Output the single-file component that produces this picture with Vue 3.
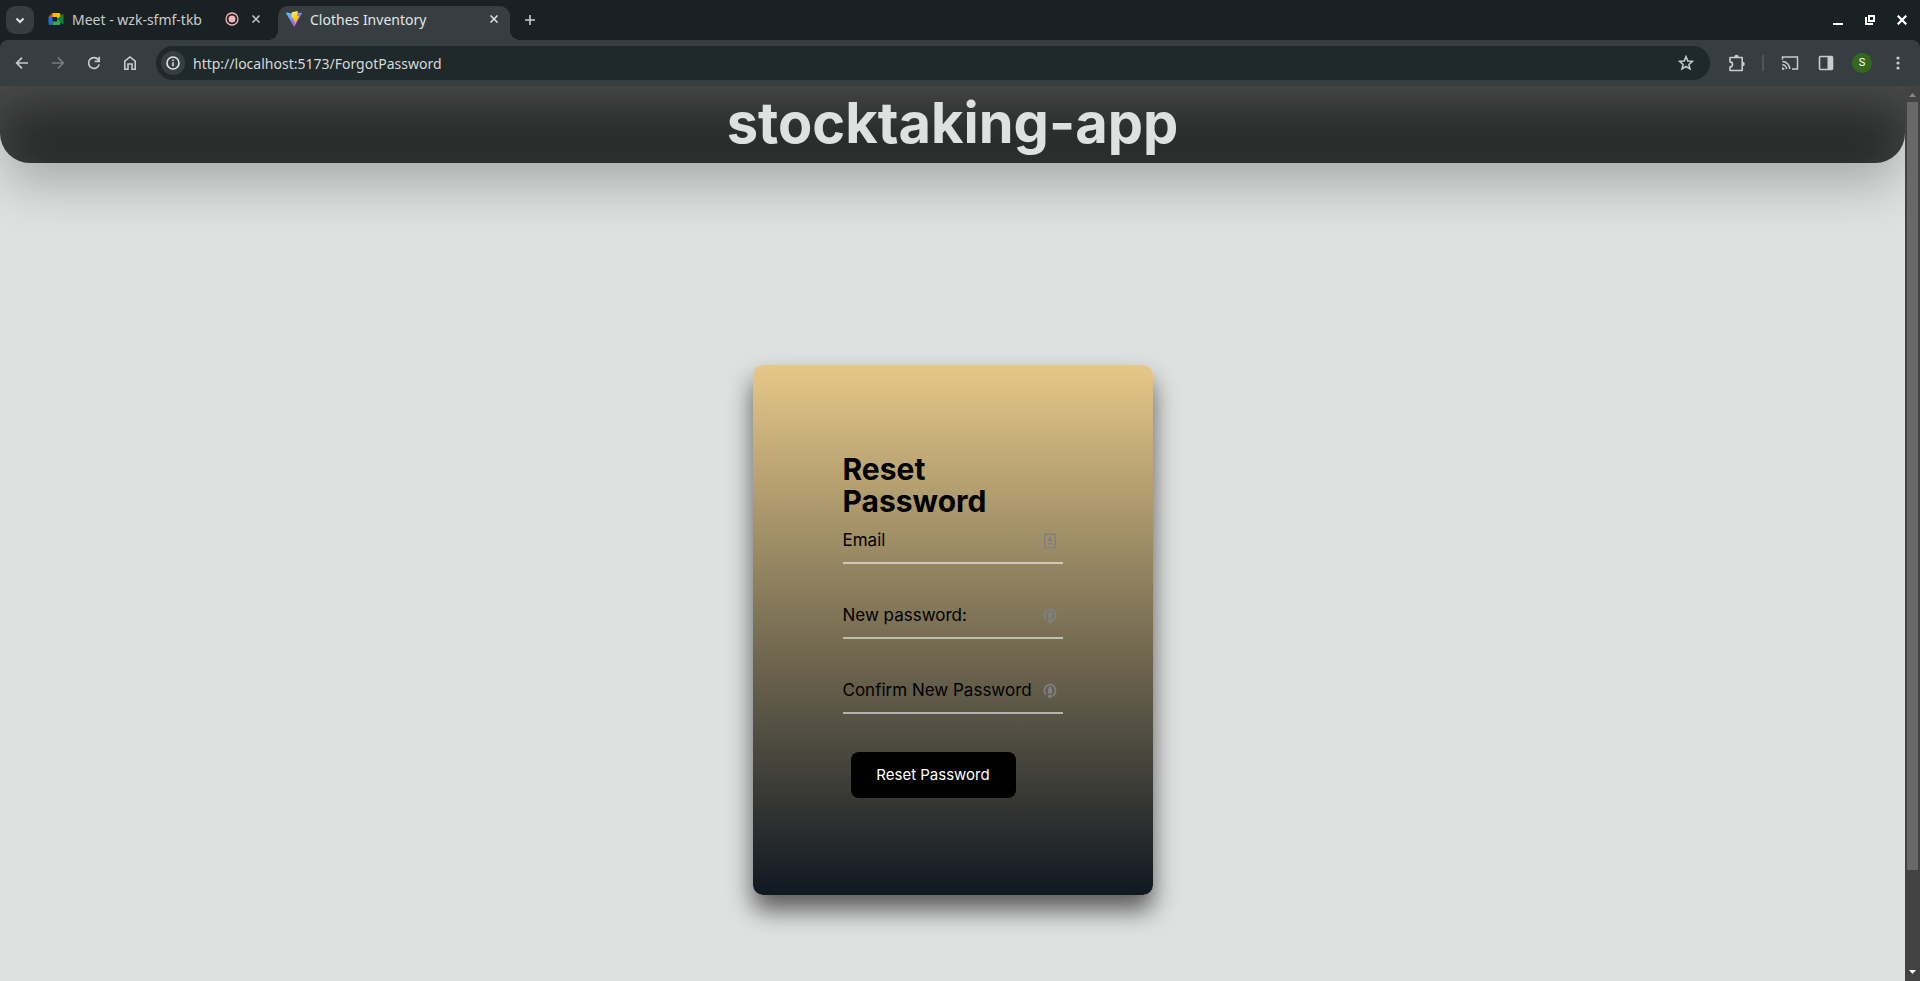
<script setup>
import { ref } from 'vue'

const address = ref('http://localhost:5173/ForgotPassword')

const form = ref({ email: '', password: '', confirm: '' })

const fields = [
  { id: 'email', label: 'Email', type: 'email', icon: 'contact' },
  { id: 'password', label: 'New password:', type: 'password', icon: 'key' },
  { id: 'confirm', label: 'Confirm New Password', type: 'password', icon: 'key' },
]
</script>

<template>
  <div class="window">
    <div class="tabstrip">
      <button class="tab-search" type="button" aria-label="Search tabs">
        <svg width="12" height="12" viewBox="0 0 12 12"><path d="M2.5 4.5 6 8l3.500-3.500" fill="none" stroke="#dfe3e4" stroke-width="2" /></svg>
      </button>

      <div class="tab">
        <svg class="favicon" width="16" height="16" viewBox="0 0 16 16">
          <path d="M4.500 2v4H0.500z" fill="#ea4335" />
          <path d="M0.500 6h4v5h-4z" fill="#1a73e8" />
          <path d="M0.500 10.500h4V14H2a1.500 1.500 0 0 1-1.500-1.500z" fill="#1967d2" />
          <path d="M4.500 2H11a1.500 1.500 0 0 1 1.500 1.500V8L9 7V6H4.500z" fill="#fbbc04" />
          <path d="M4.500 10.500H9V8l3.500 0v4.500A1.500 1.500 0 0 1 11 14H4.500z" fill="#34a853" />
          <path d="M9 8l5.500-4.800q1-.6 1 .5v8.600q0 1-1 .4z" fill="#188038" />
        </svg>
        <span class="tab-title">Meet - wzk-sfmf-tkb</span>
        <svg class="recording" width="14" height="14" viewBox="0 0 14 14">
          <circle cx="7" cy="7" r="6" fill="none" stroke="#f2b8b5" stroke-width="1.300" />
          <circle cx="7" cy="7" r="3.500" fill="#f2b8b5" />
        </svg>
        <button class="tab-close" type="button" aria-label="Close Meet tab">
          <svg width="8" height="8" viewBox="0 0 8 8"><path d="M.5.5l7 7m0-7l-7 7" stroke="#c7cccd" stroke-width="1.500" /></svg>
        </button>
      </div>

      <div class="tab active">
        <svg class="favicon" width="16" height="16" viewBox="0 0 16 16">
          <defs>
            <linearGradient id="shield" x1="0" y1="0" x2=".6" y2="1">
              <stop offset="0" stop-color="#41d1ff" />
              <stop offset="1" stop-color="#bd34fe" />
            </linearGradient>
            <linearGradient id="bolt" x1=".4" y1="0" x2=".6" y2="1">
              <stop offset="0" stop-color="#ffea83" />
              <stop offset=".2" stop-color="#ffdd35" />
              <stop offset="1" stop-color="#ffa800" />
            </linearGradient>
          </defs>
          <path d="M15.900 2.300 8.500 15.400q-.4.600-.8 0L.1 2.300q-.3-.8.600-.7L8 2.900l7.300-1.300q.9-.1.600.7z" fill="url(#shield)" />
          <path d="M11.500.1 6 1.200q-.3 0-.3.300L5.400 7q0 .4.400.4l1.500-.4q.5 0 .4.500L7.200 9.700q0 .5.400.4l1-.3q.5 0 .4.500l-.7 3.500q0 .6.400.1l4.400-8.500q.1-.4-.3-.4l-1.600.3q-.4 0-.3-.4l1-3.900z" fill="url(#bolt)" />
        </svg>
        <span class="tab-title">Clothes Inventory</span>
        <button class="tab-close" type="button" aria-label="Close Clothes Inventory tab">
          <svg width="8" height="8" viewBox="0 0 8 8"><path d="M.5.5l7 7m0-7l-7 7" stroke="#e3e6e7" stroke-width="1.500" /></svg>
        </button>
      </div>

      <button class="new-tab" type="button" aria-label="New tab">
        <svg width="12" height="12" viewBox="0 0 12 12"><path d="M6 1v10M1 6h10" stroke="#c7cccd" stroke-width="1.600" /></svg>
      </button>

      <div class="window-controls">
        <button type="button" aria-label="Minimize">
          <svg width="10" height="10" viewBox="0 0 10 10"><path d="M0 9h10" stroke="#fff" stroke-width="2" /></svg>
        </button>
        <button type="button" aria-label="Restore">
          <svg width="10" height="10" viewBox="0 0 10 10"><path d="M4 1h5v5H4zM1 2v7h7" fill="none" stroke="#fff" stroke-width="2" /></svg>
        </button>
        <button type="button" aria-label="Close window">
          <svg width="10" height="10" viewBox="0 0 10 10"><path d="M.7.7l8.600 8.600m0-8.600L.7 9.300" stroke="#fff" stroke-width="2.200" /></svg>
        </button>
      </div>
    </div>

    <div class="toolbar">
      <button type="button" aria-label="Back">
        <svg width="16" height="16" viewBox="0 0 16 16"><path d="M14 8H3M8 2.700 2.700 8 8 13.300" fill="none" stroke="#c7cccd" stroke-width="1.700" /></svg>
      </button>
      <button type="button" aria-label="Forward">
        <svg width="16" height="16" viewBox="0 0 16 16"><path d="M2 8h11M8 2.700 13.300 8 8 13.300" fill="none" stroke="#757c7f" stroke-width="1.700" /></svg>
      </button>
      <button type="button" aria-label="Reload">
        <svg width="16" height="16" viewBox="0 0 16 16"><path d="M13.200 9.400A5.400 5.400 0 1 1 12.200 4.600L13 5.500" fill="none" stroke="#c7cccd" stroke-width="1.700" /><path d="M13.200 1.800v4.500H8.700" fill="none" stroke="#c7cccd" stroke-width="1.700" /></svg>
      </button>
      <button type="button" aria-label="Home">
        <svg width="16" height="16" viewBox="0 0 16 16"><path d="M2.800 6.200 8 2l5.200 4.200v8H10V9H6v5.200H2.800z" fill="none" stroke="#c7cccd" stroke-width="1.600" /></svg>
      </button>

      <div class="omnibox">
        <button class="site-info" type="button" aria-label="View site information">
          <svg width="14" height="14" viewBox="0 0 14 14"><circle cx="7" cy="7" r="6" fill="none" stroke="#e3e6e7" stroke-width="1.600" /><path d="M7 6.200v4M7 3.600v1.500" stroke="#e3e6e7" stroke-width="1.500" /></svg>
        </button>
        <input v-model="address" type="text" aria-label="Address" spellcheck="false" />
        <button class="bookmark" type="button" aria-label="Bookmark this tab">
          <svg width="16" height="16" viewBox="0 0 16 16"><path d="M8 1.600 9.800 6l4.700.3-3.600 3.100 1.100 4.600L8 11.500 4 14l1.100-4.600L1.500 6.300 6.200 6z" fill="none" stroke="#c7cccd" stroke-width="1.500" /></svg>
        </button>
      </div>

      <button type="button" aria-label="Extensions">
        <svg width="18" height="18" viewBox="0 0 18 18"><path d="M2 3.500h12.200v13H2v-3.600a2.500 2.500 0 0 0 0-5z" fill="none" stroke="#c7cccd" stroke-width="1.600" stroke-linejoin="round" /><path d="M6.300 3a2.200 2.200 0 0 1 4.400 0zM14.600 7.800a2.200 2.200 0 0 1 0 4.400z" fill="#c7cccd" /></svg>
      </button>
      <span class="divider"></span>
      <button type="button" aria-label="Cast">
        <svg width="18" height="16" viewBox="0 0 18 16"><path d="M1.500 4.500V2h15v12H11M1.300 6.500a7.500 7.500 0 0 1 7.500 7.500M1.300 9.800A4.300 4.300 0 0 1 5.600 14.100" fill="none" stroke="#c7cccd" stroke-width="1.500" /><path d="M1 12.200a2.600 2.600 0 0 1 2.600 2.600H1z" fill="#c7cccd" /></svg>
      </button>
      <button type="button" aria-label="Side panel">
        <svg width="16" height="16" viewBox="0 0 16 16"><rect x="1.500" y="1.500" width="13" height="13" rx="1" fill="none" stroke="#c7cccd" stroke-width="1.600" /><path d="M9.500 1.500h5v13h-5z" fill="#c7cccd" /></svg>
      </button>
      <button type="button" aria-label="Profile"><span class="avatar">S</span></button>
      <button type="button" aria-label="Menu">
        <svg width="4" height="16" viewBox="0 0 4 16"><g fill="#c7cccd"><circle cx="2" cy="3" r="1.600" /><circle cx="2" cy="8" r="1.600" /><circle cx="2" cy="13" r="1.600" /></g></svg>
      </button>
    </div>

    <div class="viewport">
      <div class="page">
        <header class="banner"><h1>stocktaking-app</h1></header>
        <main>
          <form class="card" @submit.prevent>
            <h2>Reset Password</h2>
            <div v-for="field in fields" :key="field.id" class="field">
              <input :id="field.id" v-model="form[field.id]" :type="field.type" />
              <label v-show="!form[field.id]" :for="field.id">{{ field.label }}</label>
              <svg v-if="field.icon === 'contact'" class="hint" width="14" height="16" viewBox="0 0 14 16">
                <rect x="1.750" y="1.250" width="10.500" height="13.500" rx=".6" fill="none" stroke="#808083" stroke-width="1.600" />
                <path d="M6 3.500h2v2l1 1v1.700H5V6.500l1-1zM4.500 10h5v1.500h-5z" fill="#808083" />
              </svg>
              <svg v-else class="hint" width="14" height="16" viewBox="0 0 14 16">
                <path d="M3.200 12A5.600 6 0 1 1 9.800 12.700L7 13.500" fill="none" stroke="#808083" stroke-width="1.700" />
                <path d="M4.300 13.300 7.600 10.800v5.200zM4.800 6.200h4.400v4.300H4.800zM5.400 6.500V5a1.600 1.600 0 0 1 3.200 0v1.500z" fill="#808083" />
              </svg>
            </div>
            <button class="submit" type="submit">Reset Password</button>
          </form>
        </main>
      </div>
      <div class="scrollbar" aria-hidden="true">
        <svg width="7" height="4" viewBox="0 0 7 4"><path d="M3.500 0 7 4H0z" fill="#878787" /></svg>
        <div class="track"><div class="thumb"></div></div>
        <svg width="7" height="4" viewBox="0 0 7 4"><path d="M0 0h7L3.500 4z" fill="#fff" /></svg>
      </div>
    </div>
  </div>
</template>

<style>
body {
  margin: 0;
}
</style>

<style scoped>
* {
  box-sizing: border-box;
}

button,
input {
  margin: 0;
  padding: 0;
  border: 0;
  background: none;
  font: inherit;
  color: inherit;
}

button {
  display: flex;
  align-items: center;
  justify-content: center;
  flex: none;
}

svg {
  display: block;
  flex: none;
}

.window {
  display: flex;
  flex-direction: column;
  height: 100vh;
  overflow: hidden;
  background: #1a2124;
  font-family: "Noto Sans", "Open Sans", sans-serif;
  font-size: 14px;
  color: #c7cccd;
}

.tabstrip {
  display: flex;
  flex: none;
  height: 40px;
  padding: 6px 2px 0 6px;
}

.tab-search {
  width: 28px;
  height: 28px;
  border-radius: 9px;
  background: #353d40;
}

.tab {
  display: flex;
  align-items: center;
  width: 232px;
  height: 34px;
  padding: 0 8px 8px;
  margin-left: 6px;
}

.tab.active {
  position: relative;
  border-radius: 10px 10px 0 0;
  background: #363e41;
  color: #e3e6e7;
}

.tab.active::before,
.tab.active::after {
  content: "";
  position: absolute;
  bottom: 0;
  width: 10px;
  height: 10px;
}

.tab.active::before {
  right: 100%;
  background: radial-gradient(circle at 0 0, transparent 10px, #363e41 10px);
}

.tab.active::after {
  left: 100%;
  background: radial-gradient(circle at 100% 0, transparent 10px, #363e41 10px);
}

.favicon {
  margin-right: 8px;
}

.tab-title {
  flex: 1;
  min-width: 0;
  white-space: nowrap;
}

.recording {
  margin-right: 9px;
}

.tab-close {
  width: 16px;
  height: 16px;
}

.new-tab {
  width: 28px;
  height: 28px;
  margin-left: 6px;
}

.window-controls {
  display: flex;
  margin-left: auto;
}

.window-controls button {
  width: 32px;
  height: 28px;
}

.toolbar {
  display: flex;
  align-items: center;
  flex: none;
  height: 46px;
  padding: 0 4px;
  border-radius: 8px 8px 0 0;
  background: #363e41;
}

.toolbar > button {
  width: 36px;
  height: 34px;
}

.omnibox {
  display: flex;
  align-items: center;
  flex: 1;
  height: 34px;
  margin: 0 9px 0 8px;
  padding: 0 12px 0 5px;
  border-radius: 17px;
  background: #1f282b;
  color: #d5dadb;
}

.omnibox input {
  flex: 1;
  min-width: 0;
  margin-left: 8px;
}

.site-info {
  width: 24px;
  height: 24px;
  border-radius: 50%;
  background: #363e41;
}

.bookmark {
  width: 24px;
  height: 24px;
}

.divider {
  width: 2px;
  height: 16px;
  margin: 0 8px 0 7px;
  background: #4d5558;
}

.avatar {
  width: 20px;
  height: 20px;
  border-radius: 50%;
  background: #33691e;
  color: #fff;
  font-family: Roboto, sans-serif;
  font-size: 11px;
  line-height: 20px;
}

.viewport {
  display: flex;
  flex: 1;
  min-height: 0;
}

.page {
  flex: 1;
  min-width: 0;
  overflow: hidden;
  background: #dfe1e0;
  font-family: Inter, sans-serif;
}

.banner {
  padding: 5px 0 8px;
  border-radius: 0 0 30px 30px;
  background: #282929;
  box-shadow: 0 24px 50px -4px rgba(0, 0, 0, 0.25), inset 0 20px 50px rgba(255, 255, 255, 0.16);
  text-align: center;
}

h1 {
  margin: 0;
  font-size: 56px;
  line-height: 64px;
  font-weight: 700;
  color: #dfe1e0;
}

main {
  display: flex;
  justify-content: center;
  padding-top: 202px;
}

.card {
  display: flex;
  flex-direction: column;
  width: 400px;
  padding: 88px 90px 97px;
  border-radius: 10px;
  background: linear-gradient(#e6c888, #101822);
  box-shadow: 0 15px 25px rgba(0, 0, 0, 0.6);
  color: #000;
}

h2 {
  margin: 0 0 2px;
  font-size: 30px;
  line-height: 32px;
  font-weight: 700;
}

.field {
  display: grid;
  grid-template-columns: 1fr 20px;
  align-items: center;
  height: 45px;
  margin-bottom: 30px;
  font-size: 17px;
}

.field input {
  grid-area: 1 / 1 / 2 / 3;
  width: 100%;
  height: 45px;
  border-bottom: 2px solid rgba(255, 255, 255, 0.55);
  outline: none;
}

.field label {
  grid-area: 1 / 1 / 2 / 2;
  margin-bottom: 4px;
  line-height: 24px;
  white-space: nowrap;
}

.field .hint {
  grid-area: 1 / 2 / 2 / 3;
  margin-bottom: 2px;
}

.submit {
  align-self: flex-start;
  min-width: 165px;
  margin: 8px 0 0 8px;
  padding: 11px 24px;
  border-radius: 8px;
  background: #000;
  color: #fff;
  font-size: 15px;
  line-height: 24px;
}

.scrollbar {
  display: flex;
  flex-direction: column;
  align-items: center;
  width: 15px;
  padding: 7px 0;
  background: #424242;
}

.track {
  flex: 1;
  width: 11px;
  margin: 5px 0;
}

.thumb {
  height: 89%;
  background: #686868;
}
</style>
